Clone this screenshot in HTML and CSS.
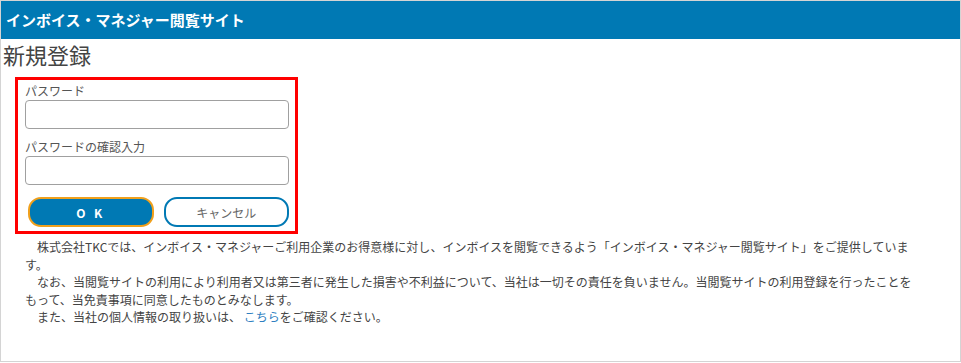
FILE: index.html
```html
<!DOCTYPE html>
<html lang="ja">
<head>
<meta charset="utf-8">
<title>インボイス・マネジャー閲覧サイト</title>
<link rel="stylesheet" href="styles.css">
</head>
<body>
<div class="frame">
  <header class="site-header">インボイス・マネジャー閲覧サイト</header>
  <h1 class="page-title">新規登録</h1>
  <form class="reg-form">
    <label class="field-label" for="pw">パスワード</label>
    <input class="field-input" id="pw" type="password">
    <label class="field-label second" for="pw2">パスワードの確認入力</label>
    <input class="field-input" id="pw2" type="password">
    <div class="btn-row">
      <button type="button" class="btn btn-ok">O K</button>
      <button type="button" class="btn btn-cancel">キャンセル</button>
    </div>
  </form>
  <div class="notice">
    <p>株式会社TKCでは、インボイス・マネジャーご利用企業のお得意様に対し、インボイスを閲覧できるよう「インボイス・マネジャー閲覧サイト」をご提供しています。</p>
    <p>なお、当閲覧サイトの利用により利用者又は第三者に発生した損害や不利益について、当社は一切その責任を負いません。当閲覧サイトの利用登録を行ったことをもって、当免責事項に同意したものとみなします。</p>
    <p>また、当社の個人情報の取り扱いは、 <a href="#" class="link">こちら</a>をご確認ください。</p>
  </div>
</div>
</body>
</html>
```
FILE: styles.css
```css
html, body {
  margin: 0;
  padding: 0;
  background: #ffffff;
}
body {
  font-family: "Noto Sans CJK JP", "Noto Sans", sans-serif;
  color: #444;
}
.frame {
  box-sizing: border-box;
  width: 961px;
  height: 362px;
  border: 1px solid #d4d4d4;
  background: #fff;
}
.site-header {
  height: 38px;
  background: #0079b4;
  color: #fff;
  font-weight: bold;
  font-size: 15px;
  line-height: 38px;
  padding-left: 5px;
}
.page-title {
  margin: 0;
  font-size: 22px;
  font-weight: normal;
  line-height: 30px;
  padding: 0 0 0 2px;
  height: 38px;
  color: #444;
}
.reg-form {
  box-sizing: border-box;
  width: 283px;
  height: 157px;
  margin-left: 14px;
  border: 3px solid #ff0000;
  padding: 2px 6px 0 7px;
  display: flex;
  flex-direction: column;
}
.field-label {
  font-size: 12px;
  line-height: 18px;
  color: #555;
}
.field-label.second {
  margin-top: 9px;
}
.field-input {
  box-sizing: border-box;
  width: 264px;
  height: 29px;
  border: 1px solid #a0a0a0;
  border-radius: 4px;
  margin: 0;
  padding: 0 6px;
  background: #fff;
}
.btn-row {
  display: flex;
  gap: 10px;
  margin-top: 12px;
  padding-left: 3px;
}
.btn {
  box-sizing: border-box;
  width: 126px;
  height: 30px;
  border-radius: 13px;
  font-family: "Noto Sans CJK JP", "Noto Sans", sans-serif;
  font-size: 12px;
  padding: 0;
  cursor: pointer;
}
.btn-ok {
  background: #0079b4;
  border: 2px solid #f0a01c;
  color: #fff;
  font-weight: bold;
  letter-spacing: 3px;
}
.btn-cancel {
  background: #fff;
  border: 2px solid #0079b4;
  color: #666;
}
.notice {
  margin-top: 4px;
  padding-left: 24px;
  width: 894px;
  font-size: 12px;
  line-height: 17.6px;
  color: #444;
}
.notice p {
  margin: 0;
  text-indent: 1em;
}
.link {
  color: #2f7fc1;
  text-decoration: none;
}
```
